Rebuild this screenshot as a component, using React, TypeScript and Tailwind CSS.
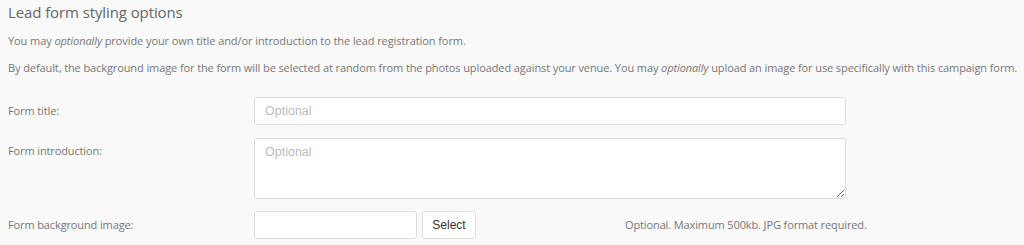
export default function App() {
  return (
    <div className="min-h-[245px] bg-[#f9f9f9] px-2 text-[#777] font-['Open_Sans',sans-serif]">
      <h3 className="text-[15px] leading-[24px] tracking-[-0.1px] text-[#666]">Lead form styling options</h3>
      <p className="mt-[8px] text-[11px] leading-[18px] tracking-[-0.08px]">
        You may <em>optionally</em> provide your own title and/or introduction to the lead registration form.
      </p>
      <p className="mt-[9px] whitespace-nowrap text-[11px] leading-[18px] tracking-[-0.1px]">
        By default, the background image for the form will be selected at random from the photos uploaded against your venue. You may <em>optionally</em> upload an image for use specifically with this campaign form.
      </p>

      <div className="mt-[20px] flex flex-col text-[11px] tracking-[-0.12px]">
        <div className="flex items-center">
          <label className="w-[246px] shrink-0">Form title:</label>
          <input
            placeholder="Optional"
            className="h-[28px] w-[592px] rounded-[3px] border border-[#ddd] bg-white px-[10px] text-[12.5px] tracking-normal font-['Liberation_Sans',Arial,sans-serif] placeholder:text-[#bbb] outline-none"
          />
        </div>
        <div className="mt-[13px] flex items-start">
          <label className="w-[246px] shrink-0 pt-[4px] leading-[18px]">Form introduction:</label>
          <textarea
            placeholder="Optional"
            className="h-[61px] w-[592px] rounded-[3px] border border-[#ddd] bg-white px-[10px] py-[4px] text-[12.5px] tracking-normal font-['Liberation_Sans',Arial,sans-serif] placeholder:text-[#bbb] outline-none"
          />
        </div>
        <div className="mt-[12px] flex items-center">
          <label className="w-[246px] shrink-0">Form background image:</label>
          <input className="h-[28px] w-[163px] rounded-[3px] border border-[#ddd] bg-white outline-none" />
          <button className="ml-[5px] h-[28px] w-[54px] rounded-[3px] border border-[#ddd] bg-white text-[12px] tracking-normal text-[#333] font-['Liberation_Sans',Arial,sans-serif]">
            Select
          </button>
          <span className="ml-[149px]">Optional. Maximum 500kb. JPG format required.</span>
        </div>
      </div>
    </div>
  )
}
